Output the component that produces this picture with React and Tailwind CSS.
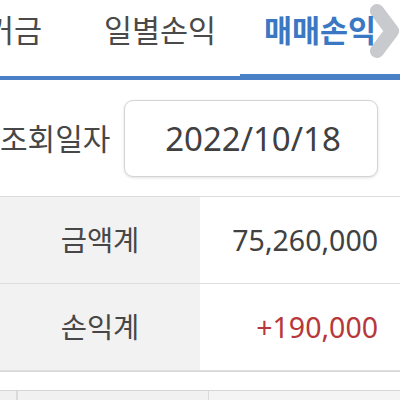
const tabs = ['증거금', '일별손익', '매매손익'];

const Chevron = () => (
  <svg className="absolute right-0 top-0 h-[62px] w-[32px]" viewBox="0 0 32 62" fill="none">
    <polyline
      points="9,11 24,31 9,51"
      stroke="#c9cacd"
      strokeWidth="14"
      strokeLinecap="round"
      strokeLinejoin="round"
    />
  </svg>
);

const SummaryRow = ({ label, value, valueClass }) => (
  <div className="flex h-[87px] border-b border-[#dedede]">
    <div className="flex w-[200px] items-center justify-center bg-[#f2f2f2] text-[28.5px] text-[#474747]">
      {label}
    </div>
    <div className={`flex flex-1 items-center justify-end pr-[22px] text-[28.5px] ${valueClass}`}>
      {value}
    </div>
  </div>
);

export default function App() {
  return (
    <div
      className="h-[400px] w-[400px] overflow-hidden bg-white"
      style={{ fontFamily: '"Noto Sans", "Noto Sans CJK KR", sans-serif' }}
    >
      {/* tabs */}
      <div className="relative h-[80px] overflow-hidden border-b-[4px] border-[#4a80c6]">
        <Chevron />
        <div className="relative ml-[-80px] flex h-full">
          {tabs.map((t, i) => {
            const active = i === 2;
            return (
              <div
                key={t}
                className={`relative flex h-full w-[160px] shrink-0 items-center justify-center pb-[14px] text-[30.5px] ${
                  active ? 'font-bold text-[#3a78c3]' : 'text-[#4a4a4a]'
                }`}
              >
                {t}
                {active && <div className="absolute bottom-0 left-0 h-[2px] w-full bg-[#4a80c6]" />}
              </div>
            );
          })}
        </div>
      </div>

      {/* date */}
      <div className="flex h-[116px] items-start pt-[20px]">
        <div className="flex h-[77px] w-[124px] items-center text-[30px] leading-none text-[#474747]">조회일자</div>
        <div className="flex h-[77px] w-[254px] items-center justify-center rounded-[9px] border border-[#d4d4d4] bg-white pl-[4px] text-[33px] text-[#404040] shadow-[0_1px_3px_rgba(0,0,0,0.12)]">
          2022/10/18
        </div>
      </div>

      {/* summary */}
      <div className="border-t border-[#dcdcdc]">
        <SummaryRow label="금액계" value="75,260,000" valueClass="text-[#414141]" />
        <SummaryRow label="손익계" value="+190,000" valueClass="text-[#b8373a]" />
      </div>
      <div className="h-[1px] bg-[#d8d8d8]" />

      {/* next table header */}
      <div className="mt-[18px] flex h-[20px] border-t border-[#d6d6d6]">
        <div className="w-[16px] bg-[#f0f0f0]" />
        <div className="w-[192px] border-l-2 border-[#dadada] bg-[#f1f1f1]" />
        <div className="flex-1 border-l border-[#dadada] bg-[#f4f4f4]" />
      </div>
    </div>
  );
}
